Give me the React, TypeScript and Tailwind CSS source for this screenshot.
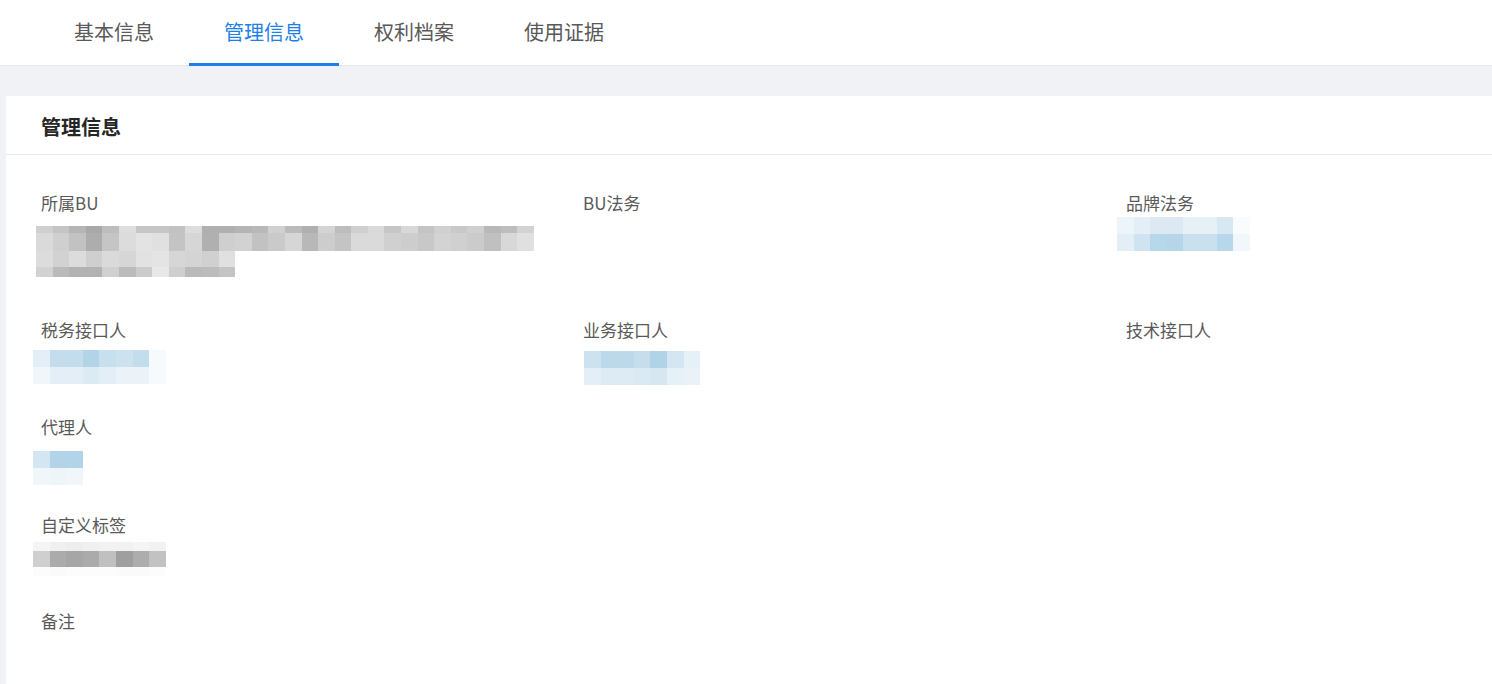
import type { ReactNode } from 'react';

const font = { fontFamily: '"Noto Sans CJK SC", "Noto Sans", sans-serif' };

const tabs = ['基本信息', '管理信息', '权利档案', '使用证据'];

type MosaicRow = { h: number; cells: string[] };

function Mosaic({ width, rows }: { width: number; rows: MosaicRow[] }) {
  return (
    <div className="flex flex-col" style={{ width }}>
      {rows.map((row, i) => (
        <div key={i} className="flex" style={{ height: row.h }}>
          {row.cells.map((c, j) => (
            <div key={j} className="w-[16.6px] shrink-0" style={{ backgroundColor: c }} />
          ))}
        </div>
      ))}
    </div>
  );
}

const buMosaic: MosaicRow[] = [
  {
    h: 7,
    cells: ['#cfcfcf', '#c4c4c4', '#b5b5b5', '#a8a8a8', '#bdbdbd', '#dedede', '#c6c6c6', '#c6c6c6', '#c2c2c2', '#dddddd', '#b0b0b0', '#b0b0b0', '#b4b4b4', '#b8b8b8', '#d0d0d0', '#bbbbbb', '#b0b0b0', '#d4d4d4', '#bdbdbd', '#cfcfcf', '#dadada', '#c6c6c6', '#d8d8d8', '#c4c4c4', '#d0d0d0', '#c8c8c8', '#cfcfcf', '#b8b8b8', '#bdbdbd', '#d2d2d2'],
  },
  {
    h: 18,
    cells: ['#dadada', '#cfcfcf', '#c2c2c2', '#adadad', '#c5c5c5', '#dcdcdc', '#e3e3e3', '#e0e0e0', '#c4c4c4', '#d6d6d6', '#b0b0b0', '#cfcfcf', '#d2d2d2', '#c2c2c2', '#cacaca', '#d6d6d6', '#b8b8b8', '#cdcdcd', '#c4c4c4', '#dadada', '#dadada', '#d0d0d0', '#cdcdcd', '#c8c8c8', '#d3d3d3', '#d0d0d0', '#cbcbcb', '#c0c0c0', '#d8d8d8', '#e0e0e0'],
  },
  {
    h: 16,
    cells: ['#dcdcdc', '#d2d2d2', '#dcdcdc', '#cfcfcf', '#dadada', '#d6d6d6', '#e2e2e2', '#e4e4e4', '#d6d6d6', '#d4d4d4', '#d0d0d0', '#e0e0e0'],
  },
  {
    h: 10,
    cells: ['#d2d2d2', '#bababa', '#b2b2b2', '#b2b2b2', '#d0d0d0', '#bbbbbb', '#cbcbcb', '#e8e8e8', '#cfcfcf', '#bababa', '#bcbcbc', '#c4c4c4'],
  },
];

const brandMosaic: MosaicRow[] = [
  { h: 17, cells: ['#eef5fa', '#e3eef6', '#dce9f3', '#dce9f3', '#e6f0f7', '#e6f0f7', '#d8e8f2', '#f9fbfd'] },
  { h: 17, cells: ['#e3eef6', '#cfe3f0', '#b7d7ea', '#b5d5e9', '#c9e0ee', '#c9e0ee', '#b8d7ea', '#f2f7fb'] },
];

const taxMosaic: MosaicRow[] = [
  { h: 17, cells: ['#e3eef7', '#c3ddec', '#c3ddec', '#b3d4e7', '#c8e0ee', '#cde2ef', '#c3ddec', '#f7fafc'] },
  { h: 17, cells: ['#f1f6fa', '#e3eef6', '#e3eef6', '#dceaf3', '#e3eef6', '#ebf3f8', '#ebf3f8', '#f7fafc'] },
];

const bizMosaic: MosaicRow[] = [
  { h: 17, cells: ['#cce2ef', '#bcd9ea', '#bcd9ea', '#c6deec', '#b0d3e7', '#d4e6f1', '#e6f0f7'] },
  { h: 17, cells: ['#e3eef6', '#ddebf4', '#ddebf4', '#dbe9f3', '#d7e7f2', '#e6f0f7', '#eaf2f8'] },
];

const agentMosaic: MosaicRow[] = [
  { h: 17, cells: ['#d4e6f1', '#b3d4e8', '#b3d4e8'] },
  { h: 17, cells: ['#f1f6fa', '#eef5f9', '#f1f6fa'] },
];

const tagMosaic: MosaicRow[] = [
  { h: 9, cells: ['#f5f5f5', '#f0f0f0', '#eeeeee', '#f0f0f0', '#f2f2f2', '#f2f2f2', '#f5f5f5', '#f2f2f2'] },
  { h: 16, cells: ['#cfcfcf', '#ababab', '#a6a6a6', '#ababab', '#c0c0c0', '#9f9f9f', '#adadad', '#c2c2c2'] },
  { h: 9, cells: ['#fcfcfc', '#fafafa', '#fcfcfc', '#fcfcfc', '#fcfcfc', '#fafafa', '#fafafa', '#fcfcfc'] },
];

function Field({ label, children }: { label: string; children?: ReactNode }) {
  return (
    <div>
      <div className="h-6 text-[17px] leading-6 text-[#595959]">{label}</div>
      <div className="mt-2">{children}</div>
    </div>
  );
}

export default function App() {
  return (
    <div className="min-h-screen overflow-hidden bg-[#f0f2f5]" style={font}>
      <div className="flex h-[66px] border-b border-[#e8e8e8] bg-white pl-[39px]">
        {tabs.map((t, i) => (
          <div
            key={t}
            className={
              i === 1
                ? 'flex h-[66px] w-[150px] shrink-0 items-center justify-center border-b-[3px] border-[#1f7fe8] text-[20px] text-[#1f7fe8]'
                : 'flex h-[66px] w-[150px] shrink-0 items-center justify-center border-b-[3px] border-transparent text-[20px] text-[#595959]'
            }
          >
            {t}
          </div>
        ))}
      </div>

      <div className="ml-[6px] mt-[30px] min-h-[600px] bg-white">
        <div className="flex h-[59px] items-center border-b border-[#e8e8e8] px-[35px] pt-[4px]">
          <span className="text-[20px] font-bold text-[#262626]">管理信息</span>
        </div>

        <div className="px-[35px] pt-[36px]">
          <div className="grid grid-cols-[542px_543px_1fr] pb-[31px]">
            <Field label="所属BU">
              <div className="h-[64px] pt-[3px] -ml-[5px]">
                <Mosaic width={498} rows={buMosaic} />
              </div>
            </Field>
            <Field label="BU法务">
              <div className="h-[64px]" />
            </Field>
            <Field label="品牌法务">
              <div className="h-[64px] -mt-[6px] -ml-[9px]">
                <Mosaic width={133} rows={brandMosaic} />
              </div>
            </Field>
          </div>

          <div className="grid grid-cols-[542px_543px_1fr] pb-[31px]">
            <Field label="税务接口人">
              <div className="h-[34px] -ml-[8px]">
                <Mosaic width={134} rows={taxMosaic} />
              </div>
            </Field>
            <Field label="业务接口人">
              <div className="h-[34px] pt-px ml-px">
                <Mosaic width={117} rows={bizMosaic} />
              </div>
            </Field>
            <Field label="技术接口人">
              <div className="h-[34px]" />
            </Field>
          </div>

          <div className="grid grid-cols-[542px_543px_1fr] pb-[32px]">
            <Field label="代理人">
              <div className="h-[34px] pt-[4px] -ml-[8px]">
                <Mosaic width={50} rows={agentMosaic} />
              </div>
            </Field>
          </div>

          <div className="grid grid-cols-[542px_543px_1fr] pb-[33px]">
            <Field label="自定义标签">
              <div className="h-[34px] -mt-[3px] -ml-[8px]">
                <Mosaic width={134} rows={tagMosaic} />
              </div>
            </Field>
          </div>

          <div className="grid grid-cols-[542px_543px_1fr] pb-[31px]">
            <Field label="备注">
              <div className="h-[34px]" />
            </Field>
          </div>
        </div>
      </div>
    </div>
  );
}
